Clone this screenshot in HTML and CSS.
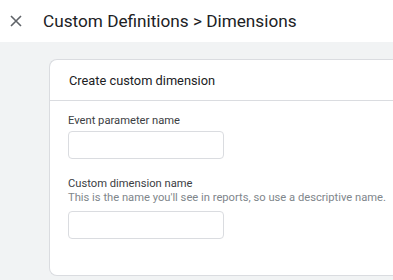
FILE: index.html
```html
<!DOCTYPE html>
<html>
<head>
<meta charset="utf-8">
<link rel="stylesheet" href="styles.css">
</head>
<body>
<header class="topbar">
  <button class="close" aria-label="Close">
    <svg width="12" height="12" viewBox="0 0 12 12"><path d="M1 1L11 11M11 1L1 11" stroke="#5f6368" stroke-width="1.6" fill="none"/></svg>
  </button>
  <h1 class="title">Custom Definitions &gt; Dimensions</h1>
</header>
<main class="page">
  <section class="card">
    <div class="card-head">Create custom dimension</div>
    <div class="card-body">
      <div class="field">
        <label class="label">Event parameter name</label>
        <div class="input"></div>
      </div>
      <div class="field field-2">
        <label class="label">Custom dimension name</label>
        <div class="hint">This is the name you'll see in reports, so use a descriptive name.</div>
        <div class="input"></div>
      </div>
    </div>
  </section>
</main>
</body>
</html>
```
FILE: styles.css
```css
* { box-sizing: border-box; }
html, body { margin: 0; padding: 0; height: 100%; }
body {
  font-family: Roboto, "Liberation Sans", sans-serif;
  background: #f1f3f4;
  overflow: hidden;
}
.topbar {
  height: 42px;
  background: #fff;
  display: flex;
  align-items: center;
}
.close {
  border: 0;
  background: none;
  padding: 0;
  margin: 0 0 0 10px;
  width: 12px;
  height: 12px;
  display: flex;
}
.title {
  margin: 0 0 0 21px;
  font-family: Roboto, sans-serif;
  font-weight: 400;
  font-size: 17.2px;
  color: #202124;
}
.page {
  padding: 17px 0 0 49px;
}
.card {
  background: #fff;
  border: 1px solid #dadce0;
  border-right: 0;
  border-radius: 8px 0 0 8px;
  height: 217px;
}
.card-head {
  height: 41px;
  border-bottom: 1px solid #dadce0;
  padding: 0 0 0 19px;
  display: flex;
  align-items: center;
  font-family: Roboto, sans-serif;
  font-size: 12.8px;
  color: #202124;
}
.card-body {
  padding: 13px 0 0 18px;
}
.field { display: flex; flex-direction: column; }
.field-2 { margin-top: 18px; }
.label {
  font-size: 11.2px;
  color: #3c4043;
  line-height: 14px;
}
.hint {
  font-size: 11.2px;
  color: #80868b;
  line-height: 14px;
  white-space: nowrap;
}
.input {
  margin-top: 3px;
  width: 156px;
  height: 28px;
  border: 1px solid #dadce0;
  border-radius: 4px;
  background: #fff;
}
.field-2 .input { margin-top: 6px; }
```
